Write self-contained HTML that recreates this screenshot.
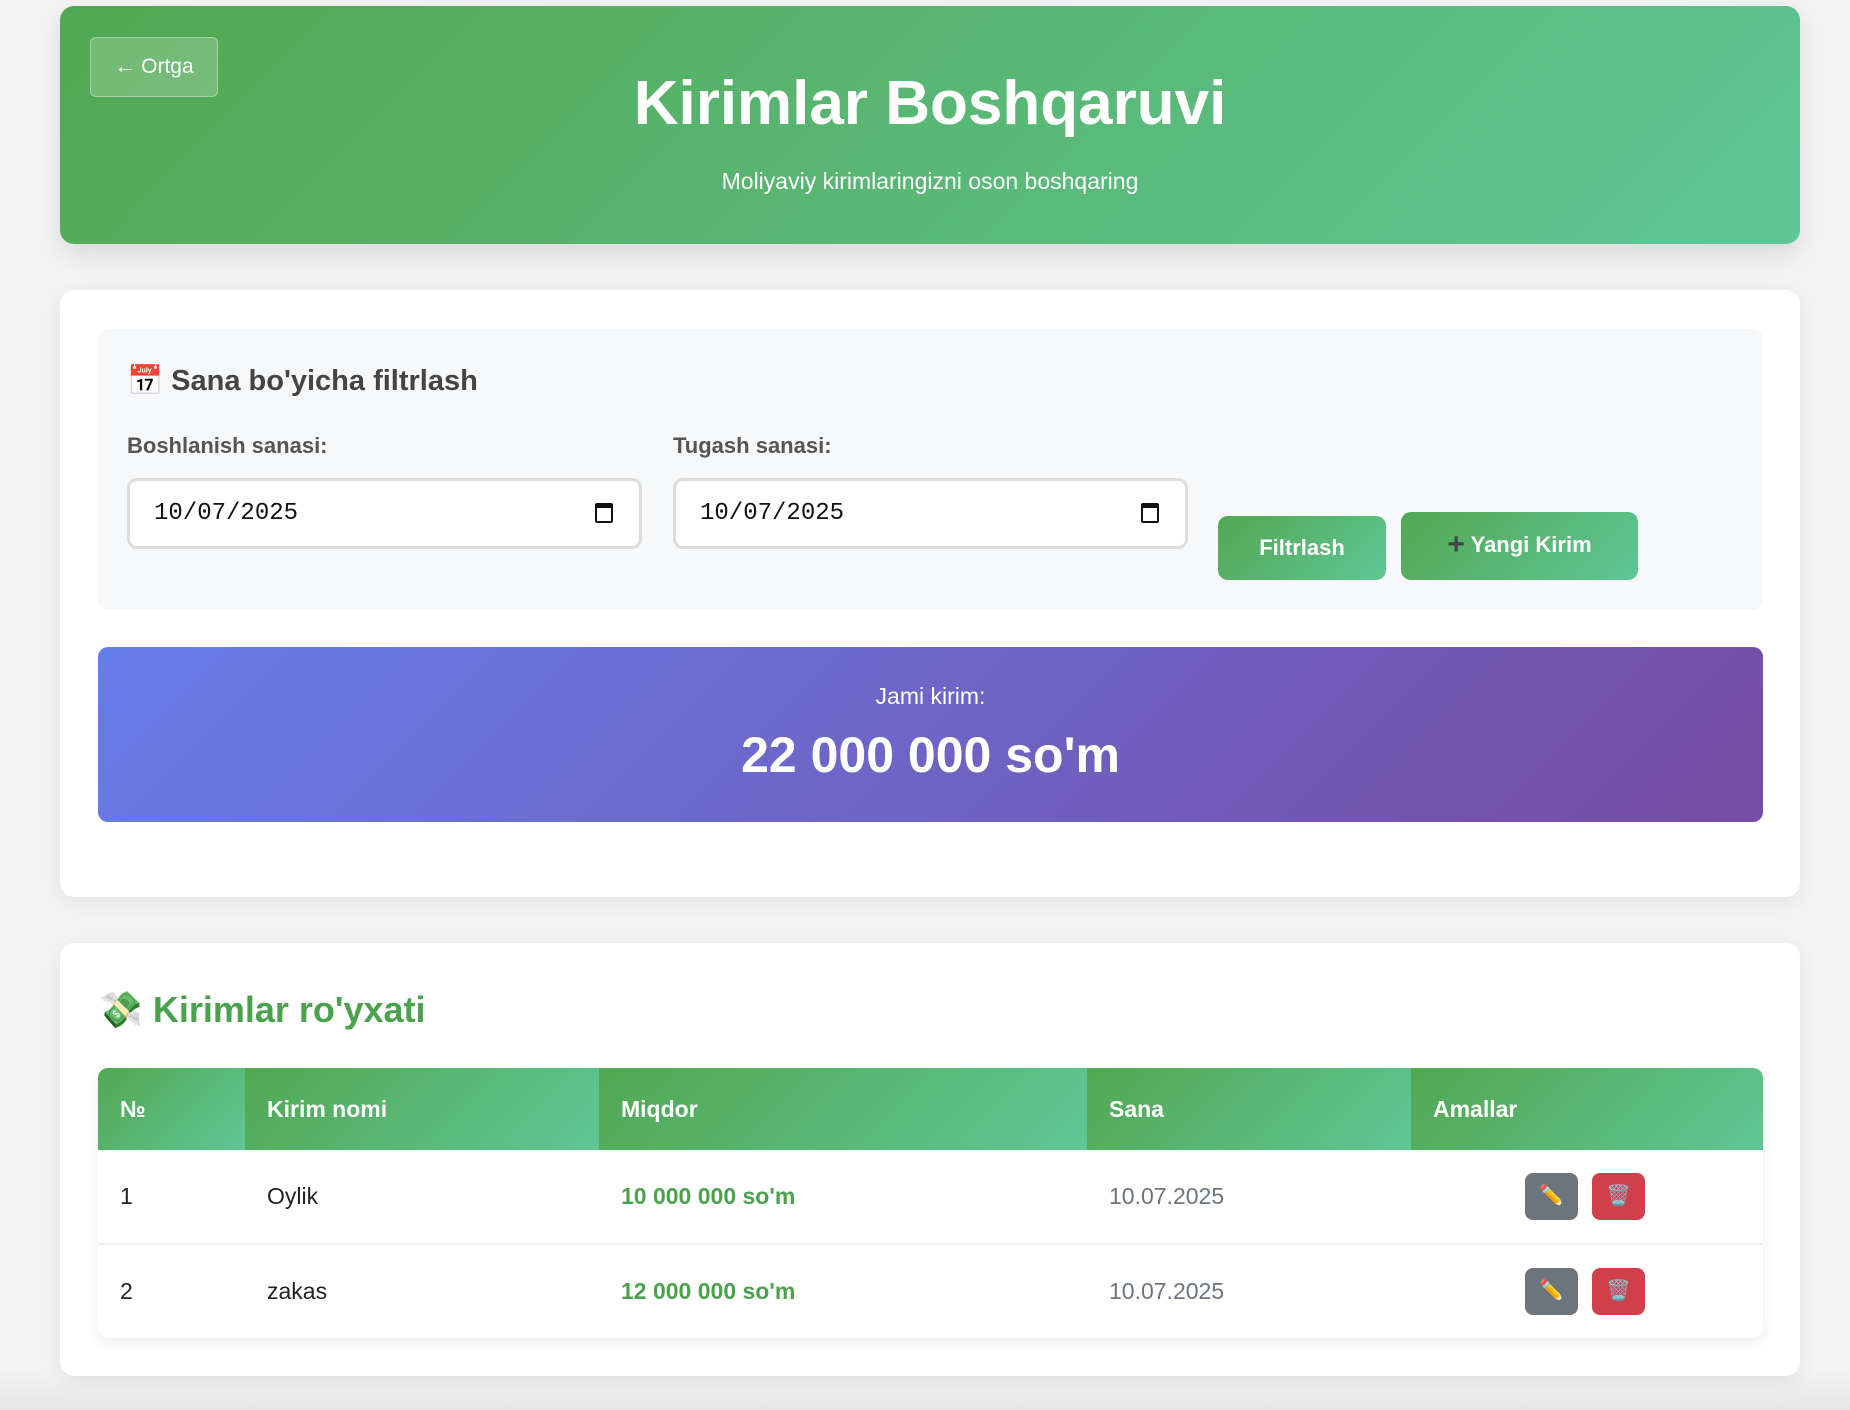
<!DOCTYPE html>
<html><head><meta charset="utf-8"><style>
*{box-sizing:border-box;margin:0;padding:0}
body{width:1850px;height:1410px;background:linear-gradient(#f3f3f3 0,#f3f3f3 1370px,#e6e6e6 1410px);font-family:"Liberation Sans",sans-serif;position:relative;overflow:hidden}
.a{position:absolute}
.g{background:linear-gradient(135deg,#52a852,#5fc696)}
.hdr{left:60px;top:6px;width:1740px;height:238px;border-radius:14px;box-shadow:0 10px 25px rgba(0,0,0,.1)}
.back{left:90px;top:37px;width:128px;height:60px;border:1px solid rgba(255,255,255,.35);background:rgba(255,255,255,.2);border-radius:6px;color:#fff;font-size:21px;line-height:58px;text-align:center}
.card{left:60px;width:1740px;background:#fff;border-radius:14px;box-shadow:0 5px 20px rgba(0,0,0,.07)}
.inp{width:515px;height:71px;border:3px solid #ddd;border-radius:10px;background:#fff;font-family:"Liberation Mono",monospace;font-size:24px;line-height:65px;padding-left:24px;color:#111}
.cal{position:absolute;right:26px;top:22px;width:18px;height:20px;border:2.5px solid #111;border-top-width:5px;border-radius:2px}
.lbl{font-size:22px;font-weight:bold;color:#555}
.btn{color:#fff;font-weight:bold;font-size:22px;text-align:center;border-radius:10px}
th{color:#fff;text-align:left;font-size:23px;font-weight:bold;padding-left:22px;height:82px;background:linear-gradient(135deg,#52a852,#5fc696)}
td{height:94px;padding-left:22px;font-size:23px;color:#222;border-bottom:2px solid #eee}
tr:last-child td{border-bottom:none}
.amt{color:#4ba24d;font-weight:bold}
.dt{color:#6c757d}
.ib{display:inline-block;width:53px;height:47px;border-radius:8px;vertical-align:middle;text-align:center;line-height:47px;font-size:20px;margin-right:14px}
</style></head><body>
<div class="a hdr g"></div>
<div class="a back">← Ortga</div>
<div class="a" style="left:60px;width:1740px;top:68px;text-align:center;color:#fff;font-size:62px;font-weight:bold">Kirimlar Boshqaruvi</div>
<div class="a" style="left:60px;width:1740px;top:168px;text-align:center;color:#fff;font-size:23px">Moliyaviy kirimlaringizni oson boshqaring</div>

<div class="a card" style="top:290px;height:607px"></div>
<div class="a" style="left:98px;top:329px;width:1665px;height:281px;background:#f7f8fa;border-radius:10px"></div>
<div class="a" style="left:127px;top:364px;font-size:29px;font-weight:bold;color:#444">📅 Sana bo'yicha filtrlash</div>
<div class="a lbl" style="left:127px;top:433px">Boshlanish sanasi:</div>
<div class="a lbl" style="left:673px;top:433px">Tugash sanasi:</div>
<div class="a inp" style="left:127px;top:478px">10/07/2025<span class="cal"></span></div>
<div class="a inp" style="left:673px;top:478px">10/07/2025<span class="cal"></span></div>
<div class="a btn g" style="left:1218px;top:516px;width:168px;height:64px;line-height:64px">Filtrlash</div>
<div class="a btn g" style="left:1401px;top:512px;width:237px;height:68px;line-height:66px"><span style="color:#444;font-size:30px;vertical-align:-2px">+</span> Yangi Kirim</div>
<div class="a" style="left:98px;top:647px;width:1665px;height:175px;border-radius:10px;background:linear-gradient(135deg,#667eea,#764ba2)"></div>
<div class="a" style="left:98px;width:1665px;top:683px;text-align:center;color:#fff;font-size:23px">Jami kirim:</div>
<div class="a" style="left:98px;width:1665px;top:726px;text-align:center;color:#fff;font-size:50px;font-weight:bold">22 000 000 so'm</div>

<div class="a card" style="top:943px;height:433px"></div>
<div class="a" style="left:98px;top:989px;font-size:36px;font-weight:bold;color:#4ba24d">💸 Kirimlar ro'yxati</div>
<div class="a" style="left:98px;top:1068px;width:1665px;border-radius:10px;overflow:hidden;box-shadow:0 4px 14px rgba(0,0,0,.08);background:#fff">
<table style="width:100%;border-collapse:collapse">
<tr><th style="width:147px">№</th><th style="width:354px">Kirim nomi</th><th style="width:488px">Miqdor</th><th style="width:324px">Sana</th><th>Amallar</th></tr>
<tr><td>1</td><td>Oylik</td><td class="amt">10 000 000 so'm</td><td class="dt">10.07.2025</td><td style="padding-left:114px"><span class="ib" style="background:#6c757d">✏️</span><span class="ib" style="background:#d0404a">🗑️</span></td></tr>
<tr><td>2</td><td>zakas</td><td class="amt">12 000 000 so'm</td><td class="dt">10.07.2025</td><td style="padding-left:114px"><span class="ib" style="background:#6c757d">✏️</span><span class="ib" style="background:#d0404a">🗑️</span></td></tr>
</table></div>
</body></html>
